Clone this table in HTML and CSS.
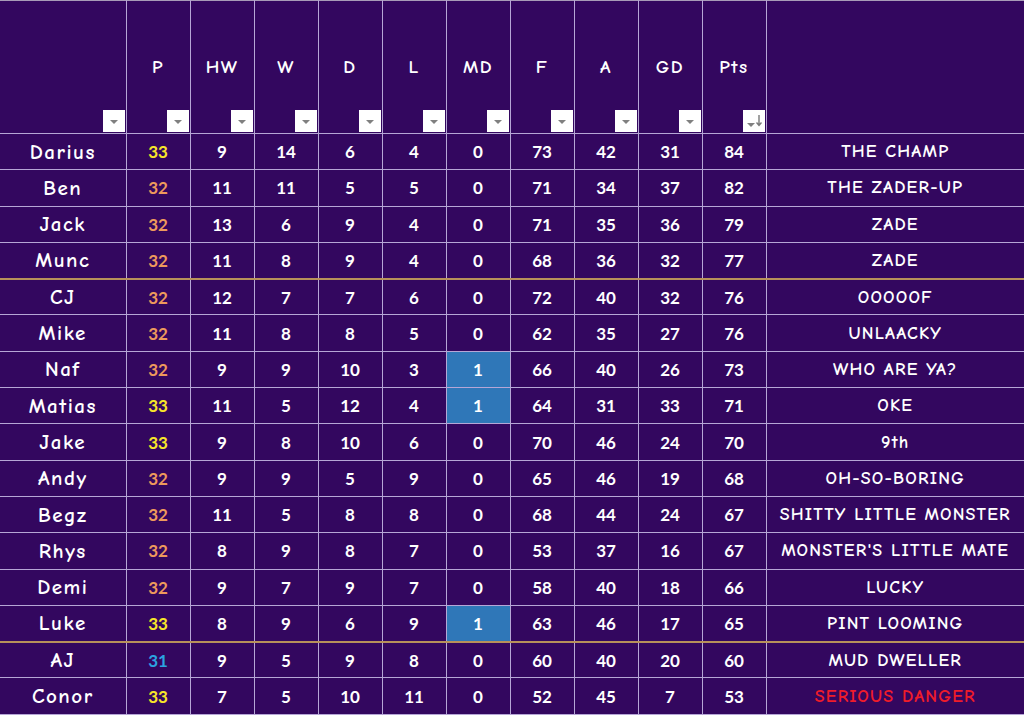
FILE: index.html
```html
<!DOCTYPE html>
<html>
<head>
<meta charset="utf-8">
<link rel="stylesheet" href="styles.css">
</head>
<body>
<table class="league">
  <colgroup>
    <col class="c-name"><col class="c-num"><col class="c-num"><col class="c-num"><col class="c-num"><col class="c-num"><col class="c-num"><col class="c-num"><col class="c-num"><col class="c-num"><col class="c-num"><col class="c-title">
  </colgroup>
  <thead>
    <tr class="head">
      <th><span class="dd"><span class="tri"></span></span></th>
      <th>P<span class="dd"><span class="tri"></span></span></th>
      <th>HW<span class="dd"><span class="tri"></span></span></th>
      <th>W<span class="dd"><span class="tri"></span></span></th>
      <th>D<span class="dd"><span class="tri"></span></span></th>
      <th>L<span class="dd"><span class="tri"></span></span></th>
      <th>MD<span class="dd"><span class="tri"></span></span></th>
      <th>F<span class="dd"><span class="tri"></span></span></th>
      <th>A<span class="dd"><span class="tri"></span></span></th>
      <th>GD<span class="dd"><span class="tri"></span></span></th>
      <th>Pts<span class="dd sort"><span class="tri"></span><svg class="arr" width="6" height="12" viewBox="0 0 6 12"><path d="M3 0V10M0.5 7.5L3 10.5L5.5 7.5" fill="none" stroke="#7a7a7a" stroke-width="1.4"/></svg></span></th>
      <th class="blank"></th>
    </tr>
  </thead>
  <tbody>
    <tr><td class="name">Darius</td><td class="p y">33</td><td>9</td><td>14</td><td>6</td><td>4</td><td>0</td><td>73</td><td>42</td><td>31</td><td>84</td><td class="title">THE CHAMP</td></tr>
    <tr><td class="name">Ben</td><td class="p o">32</td><td>11</td><td>11</td><td>5</td><td>5</td><td>0</td><td>71</td><td>34</td><td>37</td><td>82</td><td class="title">THE ZADER-UP</td></tr>
    <tr><td class="name">Jack</td><td class="p o">32</td><td>13</td><td>6</td><td>9</td><td>4</td><td>0</td><td>71</td><td>35</td><td>36</td><td>79</td><td class="title">ZADE</td></tr>
    <tr class="cut"><td class="name">Munc</td><td class="p o">32</td><td>11</td><td>8</td><td>9</td><td>4</td><td>0</td><td>68</td><td>36</td><td>32</td><td>77</td><td class="title">ZADE</td></tr>
    <tr><td class="name">CJ</td><td class="p o">32</td><td>12</td><td>7</td><td>7</td><td>6</td><td>0</td><td>72</td><td>40</td><td>32</td><td>76</td><td class="title">OOOOOF</td></tr>
    <tr><td class="name">Mike</td><td class="p o">32</td><td>11</td><td>8</td><td>8</td><td>5</td><td>0</td><td>62</td><td>35</td><td>27</td><td>76</td><td class="title">UNLAACKY</td></tr>
    <tr><td class="name">Naf</td><td class="p o">32</td><td>9</td><td>9</td><td>10</td><td>3</td><td class="md">1</td><td>66</td><td>40</td><td>26</td><td>73</td><td class="title">WHO ARE YA?</td></tr>
    <tr><td class="name">Matias</td><td class="p y">33</td><td>11</td><td>5</td><td>12</td><td>4</td><td class="md">1</td><td>64</td><td>31</td><td>33</td><td>71</td><td class="title">OKE</td></tr>
    <tr><td class="name">Jake</td><td class="p y">33</td><td>9</td><td>8</td><td>10</td><td>6</td><td>0</td><td>70</td><td>46</td><td>24</td><td>70</td><td class="title">9th</td></tr>
    <tr><td class="name">Andy</td><td class="p o">32</td><td>9</td><td>9</td><td>5</td><td>9</td><td>0</td><td>65</td><td>46</td><td>19</td><td>68</td><td class="title">OH-SO-BORING</td></tr>
    <tr><td class="name">Begz</td><td class="p o">32</td><td>11</td><td>5</td><td>8</td><td>8</td><td>0</td><td>68</td><td>44</td><td>24</td><td>67</td><td class="title">SHITTY LITTLE MONSTER</td></tr>
    <tr><td class="name">Rhys</td><td class="p o">32</td><td>8</td><td>9</td><td>8</td><td>7</td><td>0</td><td>53</td><td>37</td><td>16</td><td>67</td><td class="title">MONSTER'S LITTLE MATE</td></tr>
    <tr><td class="name">Demi</td><td class="p o">32</td><td>9</td><td>7</td><td>9</td><td>7</td><td>0</td><td>58</td><td>40</td><td>18</td><td>66</td><td class="title">LUCKY</td></tr>
    <tr class="cut"><td class="name">Luke</td><td class="p y">33</td><td>8</td><td>9</td><td>6</td><td>9</td><td class="md">1</td><td>63</td><td>46</td><td>17</td><td>65</td><td class="title">PINT LOOMING</td></tr>
    <tr><td class="name">AJ</td><td class="p b">31</td><td>9</td><td>5</td><td>9</td><td>8</td><td>0</td><td>60</td><td>40</td><td>20</td><td>60</td><td class="title">MUD DWELLER</td></tr>
    <tr><td class="name">Conor</td><td class="p y">33</td><td>7</td><td>5</td><td>10</td><td>11</td><td>0</td><td>52</td><td>45</td><td>7</td><td>53</td><td class="title danger">SERIOUS DANGER</td></tr>
  </tbody>
</table>
</body>
</html>
```

FILE: styles.css
```css
html, body {
  margin: 0;
  padding: 0;
  background: #33075f;
}

.league {
  width: 1024px;
  border-collapse: collapse;
  table-layout: fixed;
  background: #33075f;
  color: #ffffff;
  font-family: "Segoe Print", "Comic Neue", "Comic Sans MS", Lato, "Open Sans", sans-serif;
}

.c-name { width: 126px; }
.c-num { width: 64px; }
.c-title { width: 258px; }

.league th,
.league td {
  border: 1px solid #b6a6d6;
  padding: 0;
  text-align: center;
  vertical-align: middle;
}

.league tr > :first-child { border-left: none; }
.league tr > :last-child { border-right: none; }

.head { height: 133px; }
.head th {
  position: relative;
  font-weight: bold;
  font-size: 19px;
  letter-spacing: 1.5px;
  border-top: 1px solid #a89bb8;
  padding-bottom: 0;
}

.dd {
  position: absolute;
  right: 1px;
  bottom: 1px;
  width: 22px;
  height: 22px;
  background: #ffffff;
  display: flex;
  align-items: center;
  justify-content: center;
}

.tri {
  width: 0;
  height: 0;
  border-left: 4px solid transparent;
  border-right: 4px solid transparent;
  border-top: 4px solid #808080;
  margin-top: 1px;
}

.dd.sort {
  justify-content: flex-end;
  gap: 1px;
  padding-right: 3px;
  box-sizing: border-box;
}
.dd.sort .tri { margin-top: 8px; }
.arr { display: block; }

tbody tr { height: 36.3px; }

.league td {
  font-family: Lato, "Open Sans", sans-serif;
  font-size: 17px;
  font-weight: bold;
}

.league td.name {
  font-family: "Segoe Print", "Comic Neue", "Comic Sans MS", "Open Sans", sans-serif;
  font-size: 21px;
  letter-spacing: 1.5px;
}

.league td.title {
  font-family: "Segoe Print", "Comic Neue", "Comic Sans MS", "Open Sans", sans-serif;
  font-size: 18px;
  letter-spacing: 1.2px;
}

.y { color: #f7e629; }
.o { color: #ee9a5c; }
.b { color: #2ba4e0; }
.danger { color: #ef1c2a; }

.league td.md { background: #2f77b8; }

tr.cut td { border-bottom: 2px solid #b8915a; }
```
